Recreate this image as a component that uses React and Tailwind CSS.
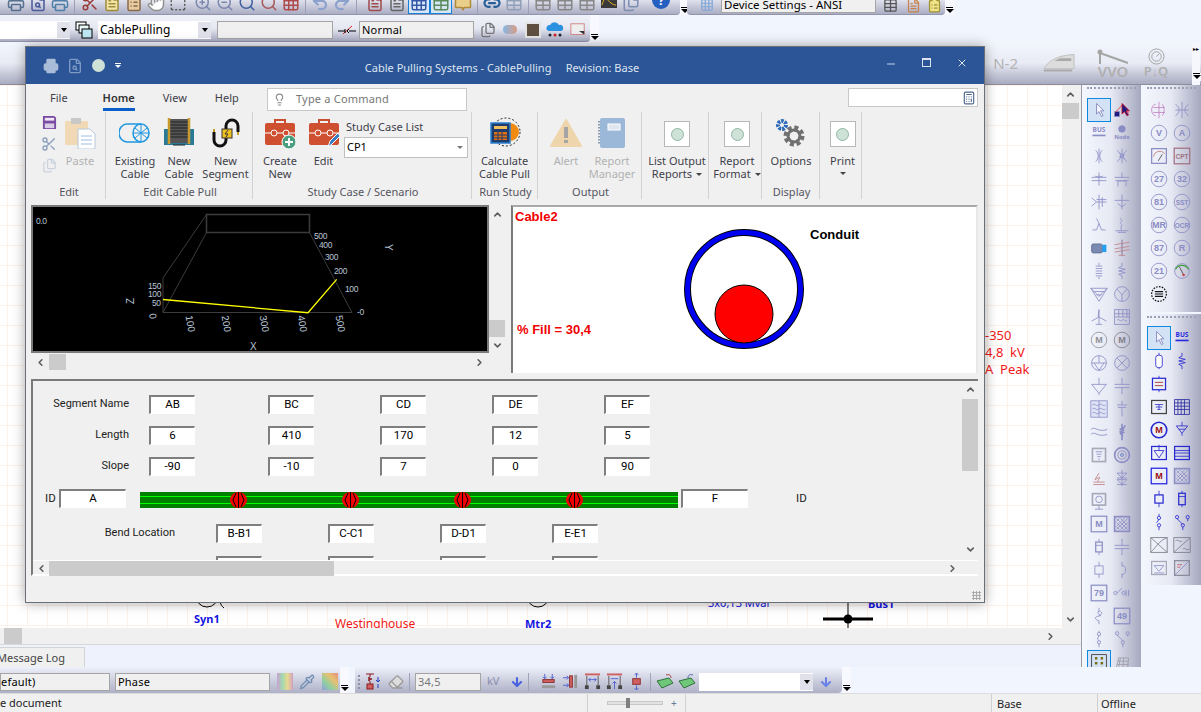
import React from 'react';
import {
  Printer, FileSearch, Scissors, FileText, ClipboardList, Hand, BoxSelect, ZoomIn, ZoomOut, Search,
  Undo2, Redo2, Grid3x3, Link2, Files, Lightbulb, ChevronUp, ChevronDown, ChevronLeft, ChevronRight,
  Minus, X, Calculator, Table, BookOpen, ArrowDown, Pipette, Eraser,
} from 'lucide-react';

const FONT = "font-['Noto_Sans',sans-serif]";
const FORM = "font-['Roboto',sans-serif]";

// little black chevron at the end of each docked toolbar
function Overflow() {
  return (
    <div className="w-[9px] self-stretch flex flex-col justify-end items-center pb-[2px] bg-[#f8f9fe]">
      <div className="w-[7px] h-[1px] bg-black mb-[1px]" />
      <div className="w-0 h-0 border-x-[4px] border-x-transparent border-t-[4px] border-t-black" />
    </div>
  );
}

function Sep() {
  return <div className="w-[1px] h-full bg-[#9d9fb8] mx-[3px] shrink-0" />;
}

function Cell({ children, className = '' }) {
  return <div className={`w-[22px] shrink-0 flex items-center justify-center ${className}`}>{children}</div>;
}

function Combo({ w, text }) {
  return (
    <div className={`${w} h-[18px] flex items-center bg-white shrink-0`}>
      <span className={`flex-1 pl-[2px] text-[12px] text-black ${FONT} leading-none`}>{text}</span>
      <div className="w-[13px] h-[16px] flex items-center justify-center bg-[#e0e1ea]">
        <div className="w-0 h-0 border-x-[3px] border-x-transparent border-t-[4px] border-t-black" />
      </div>
    </div>
  );
}

function Input({ w, text, color = 'text-black', pad = 'pl-[2px]' }) {
  return (
    <div className={`${w} h-[18px] flex items-center bg-[#f0f0f0] border border-[#a5a5a5] shrink-0 ${pad} text-[11px] tracking-[0.2px] ${color} ${FONT} leading-none`}>
      {text}
    </div>
  );
}

function TopBars() {
  const ic = 'w-[18px] h-[18px] shrink-0';
  return (
    <div className="h-[15px] flex items-stretch overflow-hidden">
      <div className="w-[680px] h-[15px] flex items-end pl-[5px] rounded-br-[4px] bg-gradient-to-b from-[#dfe1ec] to-[#abadc4] border-b border-[#9294ad]">
        <div className="flex h-[15px] items-end [&>div]:h-[22px]">
          <Cell><Printer className={`${ic} text-[#55708f]`} /></Cell>
          <Cell><FileSearch className={`${ic} text-[#4a5a9c]`} /></Cell>
          <Cell><Printer className={`${ic} text-[#4f7fa8]`} /></Cell>
          <Sep />
          <Cell className="ml-[1px]"><Scissors className={`${ic} text-[#9a3a3a]`} /></Cell>
          <Cell><FileText className={`${ic} text-[#a08a3c] fill-[#f2e6a6]`} /></Cell>
          <Cell><ClipboardList className={`${ic} text-[#8a6a4a] fill-[#e6cba0]`} /></Cell>
          <Cell><Hand className={`${ic} text-[#8f8f8f] fill-white`} /></Cell>
          <Cell><BoxSelect className={`${ic} text-[#555] fill-[#efe38a]`} /></Cell>
          <Cell className="ml-[3px]"><ZoomIn className={`${ic} text-[#7a88ab]`} /></Cell>
          <Cell><ZoomOut className={`${ic} text-[#7a88ab]`} /></Cell>
          <Cell><Search className={`${ic} text-[#3f5f9f]`} /></Cell>
          <Cell><Search className={`${ic} text-[#a85a5a]`} /></Cell>
          <Cell><Grid3x3 className={`${ic} text-[#b04a4a]`} /></Cell>
          <Sep />
          <Cell><Undo2 className={`${ic} text-[#8ba2cc]`} strokeWidth={3} /></Cell>
          <Cell><Redo2 className={`${ic} text-[#8ba2cc]`} strokeWidth={3} /></Cell>
          <Sep />
          <Cell className="ml-[4px]"><FileText className={`${ic} text-[#a04a4a]`} /></Cell>
          <Cell><FileText className={`${ic} text-[#666]`} /></Cell>
          <Cell className="bg-[#d6e6f6] border border-[#1683d8]"><Grid3x3 className={`${ic} text-[#3458a8]`} /></Cell>
          <Cell className="bg-[#d6e6f6] border border-[#1683d8]"><Table className={`${ic} text-[#5a8a5a]`} /></Cell>
          <Cell><BookOpen className={`${ic} text-[#b08a3a] fill-[#e9cf8a]`} /></Cell>
          <Sep />
          <Cell><Link2 className={`${ic} text-[#285f97]`} strokeWidth={3} /></Cell>
          <Cell><Table className={`${ic} text-[#8fa0b8]`} /></Cell>
          <Sep />
          <Cell><Table className={`${ic} text-[#888]`} /></Cell>
          <Cell><Table className={`${ic} text-[#888]`} /></Cell>
          <Cell><Table className={`${ic} text-[#888]`} /></Cell>
          <Cell><svg viewBox="0 0 18 18" className={ic}><rect x="1" y="0" width="16" height="14" fill="#3a3a3a" /><path d="M2 11c4-14 6 0 14 0" stroke="#e0b020" fill="none" /></svg></Cell>
          <Cell><Files className={`${ic} text-[#7b8db0]`} /></Cell>
          <div className="w-[8px]" />
          <Cell>
            <svg viewBox="0 0 18 18" className={ic}><circle cx="9" cy="6" r="9" fill="#2560c0" /><text x="9" y="11" textAnchor="middle" fontSize="12" fontWeight="700" fill="#fff">?</text></svg>
          </Cell>
        </div>
      </div>
      <Overflow />
      <div className="ml-[-2px] w-[258px] h-[15px] flex items-center pl-[13px] rounded-bl-[4px] rounded-br-[4px] bg-gradient-to-b from-[#dfe1ec] to-[#abadc4] border-b border-[#9294ad] overflow-hidden">
        <Grid3x3 className="w-[14px] h-[14px] text-[#7fa6d8] shrink-0 -mt-[4px]" />
        <div className={`w-[155px] h-[14px] ml-[7px] -mt-[2px] bg-[#f0f0f0] border border-[#a5a5a5] border-t-0 text-[11.5px] leading-[11px] pl-[2px] text-black ${FONT} whitespace-nowrap`}>Device Settings - ANSI</div>
        <Table className="w-[15px] h-[15px] ml-[7px] text-[#555] shrink-0 -mt-[4px]" />
        <FileText className="w-[15px] h-[15px] ml-[8px] text-[#c8824a] shrink-0 -mt-[4px]" />
        <ClipboardList className="w-[15px] h-[15px] ml-[6px] text-[#a09030] fill-[#efe38a] shrink-0 -mt-[4px]" />
      </div>
      <Overflow />
    </div>
  );
}

function SecondBar() {
  return (
    <div className="h-[27px] flex items-stretch">
      <div className="w-[590px] flex items-center pt-[3px] bg-gradient-to-b from-[#f0f2f9] via-[#e6e8f2] to-[#acaec5] rounded-br-[4px] border-b border-[#9294ad]">
        <Combo w="w-[70px]" />
        <svg viewBox="0 0 18 18" className="w-[18px] h-[18px] ml-[5px] shrink-0">
          <rect x="1" y="1" width="10" height="8" fill="#fff" stroke="#000" />
          <rect x="4" y="4" width="10" height="8" fill="#e8f6fa" stroke="#000" />
          <rect x="7" y="8" width="10" height="9" fill="#bfe6f2" stroke="#000" />
        </svg>
        <div className="ml-[5px]"><Combo w="w-[113px]" text="CablePulling" /></div>
        <div className="ml-[6px]"><Input w="w-[116px]" /></div>
        <svg viewBox="0 0 18 12" className="w-[18px] h-[12px] ml-[5px] shrink-0" fill="none">
          <path d="M0 7h7M11 7h7" stroke="#000" />
          <path d="M5 10l9-8" stroke="#e02020" />
          <path d="M7 5v4M11 5l-2 2 2 2" stroke="#000" />
        </svg>
        <div className="ml-[3px]"><Input w="w-[115px]" text="Normal" /></div>
        <Files className="w-[16px] h-[16px] ml-[6px] text-[#777] shrink-0" />
        <div className="w-[14px] h-[9px] ml-[7px] rounded-full bg-gradient-to-r from-[#7fb6e6] to-[#d99a80] shrink-0" />
        <div className="w-[16px] h-[16px] ml-[8px] bg-[#5f4f3f] border-2 border-[#e4e4e4] shrink-0" />
        <svg viewBox="0 0 18 18" className="w-[18px] h-[18px] ml-[5px] shrink-0">
          <path d="M3 10a3 3 0 0 1 1-6 5 5 0 0 1 9 0 3 3 0 0 1 2 6z" fill="#2a90e0" />
          <circle cx="4" cy="14" r="1.5" fill="#223" /><circle cx="9" cy="14" r="1.5" fill="#d02020" /><circle cx="14" cy="14" r="1.5" fill="#223" />
        </svg>
        <svg viewBox="0 0 18 18" className="w-[16px] h-[16px] ml-[6px] shrink-0"><rect x="1" y="2" width="15" height="12" fill="#eee" stroke="#d08080" /><path d="M10 10l6 4v-4z" fill="#333" /></svg>
      </div>
      <Overflow />
    </div>
  );
}

function GhostBar() {
  return (
    <div className="h-[43px] flex items-center justify-end bg-gradient-to-b from-[#f3f6fd] via-[#e9ebf5] to-[#a9abc1] pr-[1px] border-b border-[#8e8e9a]">
      <span className={`text-[15px] text-[#b4b4b4] ${FONT} mr-[25px]`}>N-2</span>
      <svg viewBox="0 0 34 22" className="w-[32px] h-[22px] mr-[22px]">
        <path d="M1 17c4-7 12-14 32-15v15z" fill="#dcdcdc" stroke="#bdbdbd" />
        <path d="M12 9l6-3h12v3z" fill="#a8a8a8" />
        <path d="M1 19h30" stroke="#a8a8a8" strokeWidth="2" />
      </svg>
      <div className="w-[32px] mr-[11px] flex flex-col items-center">
        <svg viewBox="0 0 32 16" className="w-[32px] h-[16px]"><circle cx="3" cy="3" r="2.5" fill="#a5a5a5" /><path d="M3 3v12M3 4l28 10" stroke="#a5a5a5" strokeWidth="2" /></svg>
        <span className={`text-[15px] font-semibold leading-[13px] text-[#b0b0b0] ${FONT}`}>VVO</span>
      </div>
      <div className="w-[32px] mr-[20px] flex flex-col items-center">
        <svg viewBox="0 0 18 18" className="w-[17px] h-[17px]" fill="none" stroke="#a0a0a0"><circle cx="9" cy="9" r="8" /><circle cx="9" cy="9" r="5" /><path d="M9 9l3-3" /></svg>
        <span className={`text-[13px] font-semibold leading-[13px] text-[#b0b0b0] ${FONT} whitespace-nowrap`}>P↓Q</span>
      </div>
      <div className="w-[8px] h-[43px] flex flex-col justify-between items-center py-[4px] bg-[#f6f7fd]">
        <span className="text-[6px] leading-none text-black">▸▸</span>
        <Overflow />
      </div>
    </div>
  );
}

function Scroll({ dir, className = '' }) {
  const Ic = { up: ChevronUp, down: ChevronDown, left: ChevronLeft, right: ChevronRight }[dir];
  return <Ic className={`w-[11px] h-[11px] text-[#5f5f5f] shrink-0 ${className}`} strokeWidth={3.5} />;
}

function Canvas() {
  return (
    <div className="relative flex-1 overflow-hidden bg-white bg-[linear-gradient(#fdf1ea_1px,transparent_1px),linear-gradient(90deg,#fdf1ea_1px,transparent_1px)] bg-[size:20px_20px] bg-[position:7px_0]">
      <div className={`absolute left-[985px] top-[242px] text-[13px] leading-[17px] text-[#f01818] ${FONT} whitespace-pre`}>
        <div>-350</div>
        <div>4,8  kV</div>
        <div>A  Peak</div>
      </div>
      <svg viewBox="0 0 40 30" className="absolute left-[190px] top-[511px] w-[40px] h-[30px]" fill="none" stroke="#000"><path d="M6 0a11 11 0 0 0 22 0M31 0c-2 4-1 9 3 12" /></svg>
      <div className={`absolute left-[194px] top-[526px] text-[11px] font-bold text-[#1414e0] ${FONT}`}>Syn1</div>
      <div className={`absolute left-[335px] top-[530px] text-[12px] text-[#f01818] ${FONT}`}>Westinghouse</div>
      <svg viewBox="0 0 30 20" className="absolute left-[523px] top-[511px] w-[30px] h-[20px]" fill="none" stroke="#000"><path d="M4 0a11 11 0 0 0 22 0" /></svg>
      <div className={`absolute left-[525px] top-[531px] text-[11px] font-bold text-[#1414e0] ${FONT}`}>Mtr2</div>
      <div className={`absolute left-[708px] top-[510px] text-[11px] text-[#1414e0] ${FONT} whitespace-nowrap`}>3x0,13 Mvar</div>
      <div className={`absolute left-[868px] top-[511px] text-[11px] font-bold text-[#1414e0] ${FONT}`}>Bus1</div>
      <svg viewBox="0 0 56 26" className="absolute left-[820px] top-[518px] w-[56px] h-[26px]">
        <path d="M28 0v26" stroke="#555" strokeWidth="1.5" />
        <path d="M3 16h50" stroke="#000" strokeWidth="3" />
        <circle cx="28" cy="16" r="4.5" fill="#000" />
      </svg>
    </div>
  );
}

const sym = {
  cursor: <path d="M8 3v13l3-3 3 6 2-1-3-6h4z" stroke="#7d7fb8" fill="#f3f6fd" />,
  cursorRed: <g><rect x="2" y="13" width="6" height="6" fill="#1a1a80" /><path d="M3 14L12 4l7 10" stroke="#e03030" /><path d="M11 3v13l3-3 3 5 2-1-3-5h4z" fill="#1a1a80" stroke="#d01030" /></g>,
  bus: <g><text x="11" y="10" textAnchor="middle" fontSize="8" fontWeight="700" fill="#8a8cc4" stroke="none">BUS</text><path d="M3 14h16" strokeWidth="2" /></g>,
  node: <g><circle cx="11" cy="6" r="4" fill="#8a8cc4" /><text x="11" y="18" textAnchor="middle" fontSize="7" fontWeight="700" fill="#8a8cc4" stroke="none">Node</text></g>,
  react: <path d="M11 2v18M7 4c4 4 4 10 0 14M15 4c-4 4-4 10 0 14" />,
  react2: <path d="M11 2v18M5 4c6 5 6 9 0 14M17 4c-6 5-6 9 0 14M8 8l6 2-6 2 6 2" />,
  xf2: <path d="M2 9h18M2 13h18M11 3v16M6 7a3 3 0 0 0 5 0 3 3 0 0 0 5 0" />,
  xf2b: <path d="M2 9h18M11 3v6M6 20v-6a4 4 0 0 1 4 0M16 20v-6a4 4 0 0 0-4 0M3 13h16" />,
  xf3: <path d="M2 6l6 5-6 5M8 11h12M8 8h12M11 2v18M15 5v12" />,
  xf3b: <path d="M2 9h18M11 2v18M6 13l5 4 5-4" />,
  sw: <path d="M3 17h5l3-8 3 8h5M11 9l-3-6" />,
  grd: <path d="M10 2c-3 2 3 3 0 5s3 3 0 5v6M3 18h16M6 20h10" />,
  tower: <g><path d="M11 1v19M7 20h8M2 7l18-3M2 12l18-3M2 16l18-3" stroke="#c08080" /><path d="M11 1v19" /></g>,
  coil: <path d="M11 1v3M7 5h8M7 8h8M7 11h8M7 14h8M7 17h8M11 18v3" />,
  res: <path d="M11 1v4l-4 2 8 2-8 2 8 2-8 2 4 2v4" />,
  delta: <path d="M1 4h20L11 20zM5 8h12M8 12h6M1 4l10 10 10-10" />,
  wye: <g><circle cx="11" cy="11" r="9" /><path d="M5 5l6 7 6-7M11 12v8" /></g>,
  wind: <path d="M11 2v18M7 20h8M11 11L2 16M11 11l9 5M11 2l-1 9" />,
  solar: <g><rect x="2" y="2" width="18" height="18" /><path d="M2 7h18M2 11h18M7 2v9M12 2v9M17 2v9M5 15c3-3 3 3 6 0s3 3 6 0" /></g>,
  load: <g><circle cx="11" cy="11" r="9" /><path d="M2 11h18M11 2v9M5 11l6 9 6-9" /></g>,
  x: <g><circle cx="11" cy="11" r="9" /><path d="M5 5l12 12M17 5L5 17" /></g>,
  gnd: <path d="M11 1v8M2 9h18L11 20zM11 20v2" />,
  cap: <path d="M11 1v8M2 9h18M2 13h18M11 13v8" />,
  filter: <g><rect x="1" y="1" width="20" height="20" fill="#dfe3f6" /><path d="M3 6c3-3 5 3 8 0s5 3 8 0M3 11c3-3 5 3 8 0s5 3 8 0M3 16c3-3 5 3 8 0s5 3 8 0M11 1v20" /></g>,
  capg: <path d="M11 1v5M5 6h12M6 9h10M11 9v3c-3 1 3 2 0 3s3 2 0 3v2" />,
  sine: <path d="M1 8c5-5 8 4 20 0M1 14c5-5 8 4 20 0" />,
  feeder: <path d="M11 1v20M15 3c-2 4-6 6-6 9s4 1 2 5M8 7l6 2M8 10l6 2" strokeWidth="2" />,
  pan: <g><rect x="3" y="3" width="16" height="16" strokeWidth="2" stroke="#a8a8b8" /><path d="M7 7h8M8 10h6M9 13h4M10 16h2" /></g>,
  rings: <g><circle cx="11" cy="11" r="9" strokeWidth="2" /><circle cx="11" cy="11" r="5" /><circle cx="11" cy="11" r="2" fill="#8fb0d0" /></g>,
  surge: <path d="M11 5l-5 8 6-3-3 6M4 16h14M4 19h14" stroke="#c08080" />,
  diode: <path d="M11 1v20M5 5h12L11 11zM5 11h12M5 13h12L11 19zM5 19h12" />,
  ups: <g><rect x="3" y="2" width="16" height="14" strokeWidth="2" stroke="#a8a8b8" /><circle cx="11" cy="9" r="4" /><path d="M11 16v5M6 21h10" /></g>,
  hatch: <g><rect x="2" y="2" width="18" height="18" strokeWidth="2" /><path d="M4 8l4-4M4 14L14 4M4 18L18 4M9 18l9-9M14 18l4-4M4 4l14 14M9 4l9 9M4 9l9 9M4 14l4 4" /></g>,
  fuse: <g><rect x="7" y="5" width="8" height="12" strokeWidth="1.5" /><path d="M11 1v4M11 17v4M7 9h8" /></g>,
  box: <g><rect x="6" y="6" width="10" height="10" /><path d="M11 1v5M11 16v5" /></g>,
  arc: <path d="M11 1v6M11 15v6M11 5c6 1 6 11 0 12" />,
  ooo: <g><circle cx="3" cy="11" r="2" /><path d="M5 11l6-6" /><circle cx="13" cy="11" r="2" /><path d="M16 7v8M19 7v8" /></g>,
  curl: <path d="M11 1v4c-6 3 6 5 0 6s-6 4 0 6v4M11 5c5 1 4 4 0 6" />,
  disc: <g><circle cx="11" cy="5" r="2" /><path d="M11 7l-2 4 2 2" /><circle cx="11" cy="15" r="2" /><path d="M11 1v2M11 17v4" /></g>,
  disc2: <g><circle cx="5" cy="4" r="2" /><circle cx="18" cy="4" r="2" /><path d="M5 6l8 8M18 6v2" /><circle cx="12" cy="15" r="2" /><path d="M12 17v4" /></g>,
  mesh: <g><path d="M4 18L7 6h12l-1 12zM9 6l-2 12M13 6l-1 12M5 14h14M6 10h13" stroke="#9a9aa8" /></g>,
  dots: <g><rect x="2" y="2" width="18" height="20" stroke="#333" /><g fill="#7a6a10" stroke="none"><rect x="6" y="5" width="3" height="3" /><rect x="13" y="5" width="3" height="3" /><rect x="6" y="11" width="3" height="3" /><rect x="13" y="11" width="3" height="3" /><rect x="6" y="17" width="3" height="3" /><rect x="13" y="17" width="3" height="3" /></g></g>,
  motor: <g><rect x="2" y="6" width="13" height="11" rx="2" fill="#7a8ab0" stroke="#5a6a90" /><rect x="15" y="7" width="5" height="9" fill="#22a0f0" stroke="none" /></g>,
  gauge: <g><circle cx="11" cy="11" r="9" /><path d="M3 9a9 9 0 0 1 16 0" stroke="#40a040" strokeWidth="1.5" /><path d="M8 6l5 10" stroke="#444" /><circle cx="13" cy="16" r="1.5" fill="#d04040" stroke="none" /></g>,
  meter: <g><rect x="2" y="2" width="18" height="18" strokeWidth="1.5" /><path d="M4 12a8 8 0 0 1 14-4" stroke="#c08080" /><path d="M10 17l5-8" stroke="#444" /></g>,
  gear: <g stroke="#111" strokeWidth="1.5" strokeDasharray="2 1.5"><circle cx="11" cy="11" r="9" /><path d="M6 8h10M6 11h10M6 14h10" strokeDasharray="none" /></g>,
  emerg: <path d="M11 1v20M7 4a5 7 0 0 0 0 14M4 8h14M4 14h14M15 4c3 4 3 10 0 14" />,
  emerg2: <path d="M11 1v20M3 4c6 4 6 10 0 14M19 4c-6 4-6 10 0 14M3 11h16" />,
  busB: <g><text x="11" y="10" textAnchor="middle" fontSize="8" fontWeight="700" fill="#2828e0" stroke="none">BUS</text><path d="M3 14h16" strokeWidth="2" stroke="#2828e0" /></g>,
  bat: <g stroke="#2828d0"><rect x="7" y="4" width="8" height="15" rx="3" fill="#fff" /><path d="M11 1v3M11 19v2" /></g>,
  resB: <path d="M11 1v4l-4 2 8 2-8 2 8 2-8 2 4 2v4" stroke="#2828d0" />,
  busD: <g stroke="#2828d0"><rect x="3" y="4" width="16" height="14" strokeWidth="1.5" /><path d="M6 9h10M6 13h10" stroke="#a02020" /><path d="M11 1v3M11 18v3" /></g>,
  pan2: <g><rect x="2" y="3" width="18" height="16" strokeWidth="1.5" stroke="#444" /><path d="M6 8h10M7 11h8M9 14h4M11 8v6" stroke="#3030c0" /></g>,
  grid2: <g stroke="#2828a0"><rect x="2" y="2" width="18" height="18" /><path d="M2 6h18M2 10h18M2 14h18M6 2v18M10 2v18M14 2v18" /></g>,
  gnd2: <path d="M11 1v5M4 6h14L11 15zM7 10h8M11 15v3" stroke="#2828d0" />,
  dbox: <g stroke="#2828d0"><rect x="2" y="3" width="18" height="16" strokeWidth="1.5" /><path d="M5 8h12l-6 9zM11 1v7" /></g>,
  lines: <g stroke="#2828d0"><rect x="2" y="3" width="18" height="16" strokeWidth="1.5" /><path d="M2 8h18M2 11h18M2 15h18" /></g>,
  boxB: <g stroke="#2828d0"><rect x="6" y="6" width="10" height="10" strokeWidth="1.5" /><path d="M11 1v5M11 16v5" /></g>,
  fuseB: <g stroke="#2828d0"><rect x="7" y="4" width="8" height="14" strokeWidth="1.5" /><path d="M11 1v3M11 18v3M7 8h8" /></g>,
  discB: <g stroke="#2828d0"><circle cx="11" cy="6" r="2" /><circle cx="11" cy="15" r="2" /><path d="M11 1v3M11 8l-3 4M11 17v4" /></g>,
  disc2B: <g stroke="#2828d0"><circle cx="5" cy="5" r="2" /><circle cx="18" cy="5" r="2" /><path d="M5 7l7 7M18 7v3" /><circle cx="12" cy="15" r="2" /><path d="M12 17v4" /></g>,
  cross: <g stroke="#7a7a88"><rect x="1" y="2" width="20" height="18" /><path d="M1 2l20 18M1 20C7 14 12 5 21 2" /></g>,
  cross2: <g stroke="#7a7a88"><rect x="1" y="2" width="20" height="18" /><path d="M1 20L21 2M3 6c4-3 5 3 8 0M12 16c3-3 4 3 8 0" /></g>,
  pv: <g><rect x="2" y="3" width="18" height="16" stroke="#a8a8b8" strokeWidth="1.5" /><path d="M5 8h12l-6 7zM5 17h12" /></g>,
  pv2: <g><rect x="2" y="2" width="18" height="18" stroke="#8a8a9a" strokeWidth="1.5" /><path d="M2 20L20 2" /><path d="M5 7h6M5 10h4" stroke="#c06060" /></g>,
};

function Sym({ name, text, shape, bold, color = '#8a8cc4', selected }) {
  return (
    <div className={`w-[22px] h-[22px] flex items-center justify-center shrink-0 ${selected ? 'outline outline-1 outline-[#0a8ae0] bg-[#d3e3f5]' : ''}`}>
      <svg viewBox="0 0 22 22" className="w-[18px] h-[18px]" fill="none" stroke={color}>
        {shape === 'circle' && <circle cx="11" cy="11" r="9.5" strokeWidth={bold ? 2 : 1} />}
        {shape === 'box' && <rect x="1.5" y="1.5" width="19" height="19" strokeWidth={1.5} />}
        {text && (
          <text x="11" y="15" textAnchor="middle" fontSize={text.length > 2 ? 8 : 11} fontWeight="700" fill={bold ? '#9a1010' : color} stroke="none" fontFamily="Liberation Sans">
            {text}
          </text>
        )}
        {name && sym[name]}
      </svg>
    </div>
  );
}

function Grip() {
  return <div className="h-[2px] mx-[5px] mt-[2px] border-t-2 border-dotted border-[#9ca0b4]" />;
}

const palette1 = [
  { name: 'cursor', selected: true }, { name: 'cursorRed' },
  { name: 'bus' }, { name: 'node' },
  { name: 'react' }, { name: 'react2' },
  { name: 'xf2' }, { name: 'xf2b' },
  { name: 'xf3' }, { name: 'xf3b' },
  { name: 'sw' }, { name: 'grd' },
  { name: 'motor' }, { name: 'tower' },
  { name: 'coil' }, { name: 'res' },
  { name: 'delta' }, { name: 'wye' },
  { name: 'wind' }, { name: 'solar' },
  { shape: 'circle', text: 'M', color: '#909098' }, { shape: 'circle', text: 'M', color: '#808088' },
  { name: 'load' }, { name: 'x' },
  { name: 'gnd' }, { name: 'cap' },
  { name: 'filter' }, { name: 'capg' },
  { name: 'sine' }, { name: 'feeder' },
  { name: 'pan' }, { name: 'rings' },
  { name: 'surge' }, { name: 'diode' },
  { name: 'ups' }, {},
  { shape: 'box', text: 'M' }, { name: 'hatch' },
  { name: 'fuse' }, { name: 'cap' },
  { name: 'box' }, { name: 'arc' },
  { shape: 'box', text: '79' }, { name: 'ooo' },
  { name: 'curl' }, { shape: 'box', text: '49' },
  { name: 'disc' }, { name: 'disc2' },
  { name: 'dots', selected: true }, { name: 'mesh' },
];

const palette2a = [
  { name: 'emerg', color: '#c080c0' }, { name: 'emerg2' },
  { shape: 'circle', text: 'V' }, { shape: 'circle', text: 'A' },
  { name: 'meter' }, { shape: 'box', text: 'CPT', color: '#a07080' },
  { shape: 'circle', text: '27' }, { shape: 'circle', text: '32' },
  { shape: 'circle', text: '81' }, { shape: 'circle', text: 'SST' },
  { shape: 'circle', text: 'MR' }, { shape: 'circle', text: 'OCR' },
  { shape: 'circle', text: '87' }, { shape: 'circle', text: 'R' },
  { shape: 'circle', text: '21' }, { name: 'gauge' },
  { name: 'gear', color: '#111' }, {},
];

const palette2b = [
  { name: 'cursor', selected: true }, { name: 'busB' },
  { name: 'bat' }, { name: 'resB' },
  { name: 'busD' }, {},
  { name: 'pan2' }, { name: 'grid2' },
  { shape: 'circle', text: 'M', bold: true, color: '#2828d0' }, { name: 'gnd2' },
  { name: 'dbox' }, { name: 'lines' },
  { shape: 'box', text: 'M', bold: true, color: '#2020e0' }, { name: 'hatch' },
  { name: 'boxB' }, { name: 'fuseB' },
  { name: 'discB' }, { name: 'disc2B' },
  { name: 'cross' }, { name: 'cross2' },
  { name: 'pv' }, { name: 'pv2' },
];

function PaletteGrid({ items }) {
  return (
    <div className="grid grid-cols-[22px_22px] justify-center gap-x-[1px] auto-rows-[23px] items-center pr-[2px]">
      {items.map((it, i) => <Sym key={i} {...it} />)}
    </div>
  );
}

function Palettes() {
  const bg = 'bg-gradient-to-r from-[#f4f7fe] via-[#e6e8f3] to-[#a6a8bf]';
  return (
    <div className="flex w-[120px] shrink-0">
      <div className={`w-[60px] h-full overflow-hidden border-l border-[#9a9aa8] ${bg}`}>
        <Grip />
        <div className="pt-[9px]"><PaletteGrid items={palette1} /></div>
      </div>
      <div className="w-[60px] ml-[1px] flex flex-col bg-[#f1f5fd]">
        <div className={`h-[227px] ${bg}`}>
          <Grip />
          <div className="pt-[9px]"><PaletteGrid items={palette2a} /></div>
        </div>
        <div className={`h-[271px] mt-[2px] ${bg}`}>
          <Grip />
          <div className="pt-[8px]"><PaletteGrid items={palette2b} /></div>
        </div>
      </div>
    </div>
  );
}

function AlignIcons() {
  const cls = 'w-[17px] h-[17px] shrink-0 ml-[5px]';
  return (
    <>
      <svg viewBox="0 0 18 18" className="w-[17px] h-[17px] shrink-0 ml-[11px]" fill="none">
        <rect x="3" y="7" width="12" height="3" fill="#d06060" stroke="#8a3030" /><rect x="2" y="13" width="14" height="3" fill="#999" />
        <path d="M5 1v5M13 1v5M3 4l2 2 2-2M11 4l2 2 2-2" stroke="#5060d0" />
      </svg>
      <svg viewBox="0 0 18 18" className={cls} fill="none">
        <rect x="8" y="3" width="3" height="12" fill="#d06060" stroke="#8a3030" /><rect x="13" y="2" width="3" height="14" fill="#999" />
        <path d="M1 5h6M1 13h6M5 3l2 2-2 2M5 11l2 2-2 2" stroke="#5060d0" />
      </svg>
      <svg viewBox="0 0 18 18" className={cls} fill="none">
        <path d="M1 1.5h16" stroke="#d06060" strokeWidth="2" /><path d="M3 3v10M15 3v10" stroke="#555" /><rect x="1" y="13" width="4" height="4" fill="#444" /><rect x="13" y="13" width="4" height="4" fill="#444" />
        <path d="M5 7h8M5 7l2-2M13 7l-2-2M5 7l2 2M13 7l-2 2" stroke="#5060d0" />
      </svg>
      <svg viewBox="0 0 18 18" className={cls} fill="none">
        <path d="M1 1.5h16" stroke="#d06060" strokeWidth="2" /><path d="M3 3v10M15 3v10" stroke="#555" /><rect x="1" y="13" width="4" height="4" fill="#444" /><rect x="13" y="13" width="4" height="4" fill="#444" />
        <path d="M5 6h8M9 17V9M7 11l2-2 2 2" stroke="#5060d0" />
      </svg>
      <svg viewBox="0 0 18 18" className={cls} fill="none">
        <rect x="5" y="6" width="8" height="6" fill="#d06060" stroke="#8a3030" />
        <path d="M9 0v5M9 13v5M7 2l2-2 2 2M7 16l2 2 2-2" stroke="#5060d0" />
      </svg>
    </>
  );
}

function BottomBar() {
  return (
    <div className="h-[26px] flex items-stretch">
      <div className="flex items-center pt-[3px] w-[340px] bg-gradient-to-b from-[#eef1fa] to-[#aeb0c6]">
        <Input w="w-[110px]" text="efault)" pad="pl-0" />
        <div className="ml-[5px]"><Input w="w-[155px]" text="Phase" /></div>
        <div className="w-[16px] h-[17px] ml-[7px] bg-[linear-gradient(90deg,#c9a0d0,#a0d8b0,#e8d890,#d0a0c0)] shrink-0" />
        <Pipette className="w-[16px] h-[16px] ml-[6px] text-[#6f8fb5] shrink-0" />
        <div className="w-[16px] h-[17px] ml-[7px] bg-[linear-gradient(45deg,#90a0e0,#90d0a0,#e8c070,#e09080)] shrink-0" />
      </div>
      <Overflow />
      <div className="w-[6px]" />
      <div className="flex items-center pt-[3px] w-[487px] pl-[3px] rounded-br-[4px] bg-gradient-to-b from-[#eef1fa] to-[#aeb0c6]">
        <div className="h-[14px] border-l-2 border-dotted border-[#8e90a8]" />
        <svg viewBox="0 0 18 18" className="w-[18px] h-[18px] ml-[5px] shrink-0" fill="none">
          <path d="M1 1h8M5 1v3l-2 1 4 1-4 1 2 1v3" stroke="#8a1a1a" /><rect x="2" y="11" width="6" height="5" fill="#d06060" stroke="#8a1a1a" />
          <path d="M13 4v5M15 7l-2 2-2-2M13 15v-4" stroke="#2040c0" />
        </svg>
        <Eraser className="w-[16px] h-[16px] ml-[5px] text-[#999] fill-[#ddd] shrink-0" />
        <div className="w-[1px] h-[18px] bg-[#a0a2b8] ml-[5px]" />
        <div className="ml-[5px]"><Input w="w-[66px]" text="34,5" color="text-[#777]" /></div>
        <span className={`ml-[6px] text-[11px] text-[#8a8cb0] ${FONT}`}>kV</span>
        <ArrowDown className="w-[14px] h-[14px] ml-[11px] text-[#4a62e0]" strokeWidth={3.5} />
        <div className="w-[1px] h-[18px] bg-[#a0a2b8] ml-[4px]" />
        <AlignIcons />
        <div className="w-[1px] h-[18px] bg-[#a0a2b8] ml-[5px]" />
        <svg viewBox="0 0 18 18" className="w-[18px] h-[18px] ml-[5px] shrink-0"><path d="M1 8l12-3 4 5-11 5z" fill="#6fc87a" stroke="#2f6f3a" /><path d="M10 2c3-1 5 0 5 3" stroke="#b04040" fill="none" /></svg>
        <svg viewBox="0 0 18 18" className="w-[18px] h-[18px] ml-[4px] shrink-0"><path d="M1 8l12-3 4 5-11 5z" fill="#6fc87a" stroke="#2f6f3a" /><path d="M15 2c-3-1-5 0-5 3" stroke="#5a6ab0" fill="none" /></svg>
        <div className="ml-[3px]"><Combo w="w-[114px]" /></div>
        <ArrowDown className="w-[14px] h-[14px] ml-[6px] text-[#6a82e8]" strokeWidth={3.5} />
      </div>
      <Overflow />
    </div>
  );
}

function StatusBar() {
  return (
    <div className={`h-[19px] flex items-center bg-[#f0f0f0] border-t border-[#dcdcdc] text-[11px] text-[#222] ${FONT}`}>
      <span className="w-[587px]">e document</span>
      <div className="w-[98px] h-full border-l border-[#d0d0d0] flex items-center pl-[19px]">
        <div className="relative w-[56px] h-[4px] bg-[#e2e2e2] border border-[#c8c8c8]">
          <div className="absolute left-[18px] -top-[4px] w-[4px] h-[10px] bg-[#7f7f7f]" />
        </div>
        <span className="ml-[8px] text-[10px] text-[#6a7a9a]">+</span>
      </div>
      <div className="w-[306px] h-full border-l border-[#d0d0d0]" />
      <div className="w-[106px] h-full border-l border-[#d0d0d0] pl-[5px] leading-[19px]">Base</div>
      <div className="flex-1 h-full border-l border-[#d0d0d0] pl-[3px] leading-[19px]">Offline</div>
    </div>
  );
}

function BigBtn({ w, icon, lines, caret, dim }) {
  return (
    <div className={`${w} shrink-0 flex flex-col items-center`}>
      <div className="h-[42px] flex items-center justify-center">{icon}</div>
      <div className={`text-center text-[11px] leading-[13px] ${dim ? 'text-[#b0b0b0]' : 'text-[#3f3f4a]'} ${FONT} whitespace-nowrap`}>
        {lines.map((l, i) => <div key={i}>{l}{caret && i === lines.length - 1 && <span className="inline-block ml-[4px] mb-[2px] w-0 h-0 border-x-[3px] border-x-transparent border-t-[3px] border-t-[#444]" />}</div>)}
      </div>
    </div>
  );
}

function Group({ w, label, children }) {
  return (
    <div className={`${w} h-[87px] shrink-0 flex flex-col border-r border-[#d2d2d2]`}>
      <div className="flex-1 flex">{children}</div>
      <div className={`h-[15px] pl-[2px] text-center text-[11px] leading-[15px] text-[#55555f] ${FONT} whitespace-nowrap`}>{label}</div>
    </div>
  );
}

function Placeholder() {
  return (
    <div className="w-[26px] h-[26px] bg-white border border-[#b8b8b8] flex items-center justify-center mt-[2px]">
      <div className="w-[13px] h-[13px] rounded-full bg-[#cfe2d8] border border-[#8fb5a5]" />
    </div>
  );
}

function Toolbox({ children }) {
  return (
    <svg viewBox="0 0 32 32" className="w-[32px] h-[32px]">
      <path d="M11 6V3h10v3" fill="none" stroke="#c94f30" strokeWidth="2" />
      <rect x="1" y="6" width="30" height="22" rx="2" fill="#cf5030" />
      <path d="M1 16h6M13 16h6M25 16h6" stroke="#fff" />
      <circle cx="10" cy="16" r="3" fill="none" stroke="#fff" />
      <circle cx="22" cy="16" r="3" fill="none" stroke="#fff" />
      {children}
    </svg>
  );
}

function Ribbon() {
  return (
    <div className="flex h-[87px] pl-[5px]">
      <Group w="w-[75px]" label="Edit">
        <div className="w-[36px] flex flex-col items-center pt-[3px] gap-[6px]">
          <svg viewBox="0 0 16 16" className="w-[15px] h-[15px]"><path d="M1 1h12l2 2v12H1z" fill="#7a4ba0" /><rect x="3" y="3" width="10" height="3" fill="#efe8f6" /><rect x="3" y="9" width="10" height="5" fill="#d8cce6" /></svg>
          <Scissors className="w-[16px] h-[16px] text-[#8ba0bc]" />
          <Files className="w-[15px] h-[15px] text-[#c9d0de]" />
        </div>
        <BigBtn w="w-[26px]" lines={['Paste']} dim icon={
          <svg viewBox="0 0 32 32" className="w-[32px] h-[32px]"><rect x="1" y="4" width="23" height="24" rx="1" fill="#f1d9b5" /><rect x="7" y="1" width="10" height="6" fill="#c8c8c8" /><path d="M14 12h12l5 5v15H14z" fill="#fff" stroke="#b8c8dc" /><path d="M17 19h11M17 23h11M17 27h11" stroke="#9cc0e0" /></svg>
        } />
      </Group>
      <Group w="w-[147px]" label="Edit Cable Pull">
        <BigBtn w="w-[58px]" lines={['Existing', 'Cable']} icon={
          <svg viewBox="0 0 32 22" className="w-[32px] h-[22px]" fill="none" stroke="#1e96e0" strokeWidth="1.5"><path d="M8 2h14M8 20h14" /><path d="M8 2a8 9 0 0 0 0 18" /><ellipse cx="22" cy="11" rx="8" ry="9" /><path d="M16 6l12 10M16 16l12-10M14 11h16M22 2v18" strokeWidth="1" /></svg>
        } />
        <BigBtn w="w-[30px]" lines={['New', 'Cable']} icon={
          <svg viewBox="0 0 32 32" className="w-[32px] h-[32px]"><path d="M1 12h30v16H1z" fill="#2a7a96" /><rect x="6" y="2" width="20" height="24" fill="#555" /><path d="M6 5h20M6 8h20M6 11h20M6 14h20M6 17h20M6 20h20" stroke="#222" /><path d="M6 1v26M26 1v26" stroke="#c89a30" strokeWidth="2.5" /><path d="M10 28h12" stroke="#222" /></svg>
        } />
        <BigBtn w="w-[63px]" lines={['New', 'Segment']} icon={
          <svg viewBox="0 0 32 32" className="w-[32px] h-[32px]" fill="none"><path d="M4 15v8a6 6 0 0 0 12 0V9a6 6 0 0 1 12 0v6" stroke="#111" strokeWidth="3" /><rect x="12" y="12" width="10" height="9" fill="#f0c020" stroke="#333" /><path d="M18 13l-3 4h3l-2 3" stroke="#333" /><path d="M4 12v3M28 15v3" stroke="#c8a020" strokeWidth="2" /></svg>
        } />
      </Group>
      <Group w="w-[219px]" label="Study Case / Scenario">
        <BigBtn w="w-[54px]" lines={['Create', 'New']} icon={
          <Toolbox><circle cx="25" cy="25" r="7" fill="#4a9e80" stroke="#fff" /><path d="M25 21v8M21 25h8" stroke="#fff" strokeWidth="2" /></Toolbox>
        } />
        <BigBtn w="w-[33px]" lines={['Edit']} icon={
          <Toolbox><path d="M20 30l2-6 8-8 2 3-8 8z" fill="#3a7ac0" stroke="#fff" /></Toolbox>
        } />
        <div className="ml-[4px] w-[124px] pt-[7px]">
          <div className={`pl-[2px] text-[11px] leading-[16px] text-[#3f3f4a] ${FONT}`}>Study Case List</div>
          <div className="mt-[2px] h-[21px] bg-white border border-[#c0c0c0] flex items-center justify-between px-[2px]">
            <span className={`text-[11px] text-black ${FONT}`}>CP1</span>
            <div className="mr-[2px] w-0 h-0 border-x-[3px] border-x-transparent border-t-[3px] border-t-[#777]" />
          </div>
        </div>
      </Group>
      <Group w="w-[66px]" label="Run Study">
        <BigBtn w="w-[65px]" lines={['Calculate', 'Cable Pull']} icon={
          <svg viewBox="0 0 32 32" className="w-[32px] h-[32px]">
            <circle cx="17" cy="15" r="14" fill="none" stroke="#222" strokeDasharray="2 2" />
            <circle cx="21" cy="15" r="9" fill="#f08a10" />
            <rect x="2" y="6" width="19" height="20" fill="#1f3c6a" stroke="#2a80d0" strokeWidth="1.5" />
            <rect x="5" y="9" width="13" height="3" fill="#f0c060" />
            <path d="M5 15h13v8H5z" fill="#e07010" /><path d="M5 18h13M5 21h13M9 15v8M13 15v8" stroke="#1f3c6a" />
          </svg>
        } />
      </Group>
      <Group w="w-[104px]" label="Output">
        <BigBtn w="w-[56px]" lines={['Alert']} dim icon={
          <svg viewBox="0 0 32 30" className="w-[32px] h-[30px]"><path d="M16 2l15 26H1z" fill="#efd5ac" stroke="#efd5ac" strokeLinejoin="round" strokeWidth="2" /><rect x="14" y="9" width="4" height="11" fill="#a5a5a5" /><rect x="14" y="22" width="4" height="3" fill="#a5a5a5" /></svg>
        } />
        <BigBtn w="w-[36px]" lines={['Report', 'Manager']} dim icon={
          <svg viewBox="0 0 28 32" className="w-[28px] h-[32px]"><rect x="2" y="1" width="25" height="30" rx="2" fill="#9cb8d8" /><path d="M1 4v24" stroke="#8a9ab0" strokeWidth="2" strokeDasharray="1.5 1.5" /><rect x="10" y="7" width="12" height="6" fill="#dfe6f0" stroke="#fff" /></svg>
        } />
      </Group>
      <Group w="w-[67px]" label="">
        <BigBtn w="w-[70px]" lines={['List Output', 'Reports']} caret icon={<Placeholder />} />
      </Group>
      <Group w="w-[53px]" label="">
        <BigBtn w="w-[56px]" lines={['Report', 'Format']} caret icon={<Placeholder />} />
      </Group>
      <Group w="w-[58px]" label="Display">
        <BigBtn w="w-[58px]" lines={['Options']} icon={
          <svg viewBox="0 0 32 32" className="w-[32px] h-[32px]" fill="none">
            <circle cx="7" cy="8" r="4" stroke="#2a6ab8" strokeWidth="4" strokeDasharray="2.5 1" />
            <circle cx="19" cy="19" r="7.5" stroke="#707070" strokeWidth="6" strokeDasharray="3.5 2.4" />
            <circle cx="19" cy="19" r="6" stroke="#707070" strokeWidth="3" />
          </svg>
        } />
      </Group>
      <Group w="w-[42px]" label="">
        <div className="w-[45px] shrink-0 flex flex-col items-center">
          <div className="h-[42px] flex items-center"><Placeholder /></div>
          <div className={`text-[11px] leading-[13px] text-[#3f3f4a] ${FONT}`}>Print</div>
          <div className="mt-[5px] w-0 h-0 border-x-[3px] border-x-transparent border-t-[3px] border-t-[#444]" />
        </div>
      </Group>
    </div>
  );
}

function Chart() {
  const label = { fill: '#b9c4d6', fontSize: 8.5, letterSpacing: -0.4, fontFamily: 'Liberation Sans' };
  const big = { fill: '#b9c4d6', fontSize: 10, fontFamily: 'Liberation Sans' };
  const xticks = [['100', 185.5], ['200', 221.5], ['300', 259.5], ['400', 297.5], ['500', 335.5]];
  const yticks = [['500', 314, 239], ['400', 319, 248], ['300', 325, 260], ['200', 334, 274], ['100', 345, 292]];
  return (
    <svg viewBox="33 207 454 144" className="w-[454px] h-[144px] block bg-black">
      <g fill="none" stroke="#3c3c3c">
        <rect x="206.5" y="214.5" width="103" height="18" strokeWidth="1.5" />
        <path d="M163 312.5H352L309.5 232.5M163 312.5L206.5 232.5M163 278L206.5 214.5M163 278v34" />
      </g>
      <path d="M163 299.5L308 312.7L336.7 279.3" fill="none" stroke="#ffff00" strokeWidth="1.3" />
      <text x="36" y="224" {...label}>0.0</text>
      <text x="148" y="289" {...label}>150</text>
      <text x="148" y="297" {...label}>100</text>
      <text x="152" y="306" {...label}>50</text>
      <text x="357" y="315" {...label}>-0</text>
      {yticks.map(([t, x, y]) => <text key={t} x={x} y={y} {...label}>{t}</text>)}
      {xticks.map(([t, x]) => <text key={t} transform={`rotate(80 ${x} 316)`} x={x} y={316} {...big}>{t}</text>)}
      <text transform="rotate(80 149 314)" x="149" y="314" {...big}>0</text>
      <text transform="rotate(-90 134 304)" x="134" y="304" {...big}>Z</text>
      <text transform="rotate(90 385 244)" x="385" y="244" {...big}>Y</text>
      <text x="250" y="350" {...big}>X</text>
    </svg>
  );
}

function Field({ text, w = 'w-[46px]' }) {
  return (
    <div className={`${w} h-[19px] shrink-0 bg-white border-t-2 border-l-2 border-[#7f7f7f] border-b border-r border-b-white border-r-white flex items-center justify-center text-[11.5px] leading-none text-black ${FORM}`}>
      {text}
    </div>
  );
}

function SegRow({ label, values, top = '' }) {
  return (
    <div className={`flex items-center ${top}`}>
      <div className={`w-[96px] text-right text-[11px] text-[#222] ${FORM}`}>{label}</div>
      <div className="ml-[20px]"><Field text={values[0]} /></div>
      <div className="ml-[73px]"><Field text={values[1]} /></div>
      <div className="ml-[66px]"><Field text={values[2]} /></div>
      <div className="ml-[66px]"><Field text={values[3]} /></div>
      <div className="ml-[66px]"><Field text={values[4]} /></div>
    </div>
  );
}

function Bend({ left }) {
  return (
    <svg viewBox="0 0 17 16" className={`absolute top-0 ${left} w-[17px] h-[16px]`} fill="none">
      <ellipse cx="8.5" cy="8" rx="8.5" ry="8" fill="#f00000" />
      <path d="M8.5 0v16M6 1L3 8l3 7M11 1l3 7-3 7" stroke="#000" />
    </svg>
  );
}

function CablePullWindow() {
  return (
    <div className="absolute left-[25px] top-[46px] w-[960px] h-[557px] flex flex-col bg-[#f0f0f0] border border-[#6b6f78] shadow-[0_0_12px_rgba(0,0,0,0.35)]">
      <div className={`h-[37px] shrink-0 flex items-center bg-[#2b5597] text-[#dde4f0] text-[11px] ${FONT}`}>
        <div className="w-[130px] flex items-center pl-[17px]">
          <Printer className="w-[16px] h-[16px] text-[#a9bcd8] fill-[#a9bcd8]" />
          <FileSearch className="w-[16px] h-[16px] ml-[8px] text-[#7f9ac4]" />
          <div className="w-[13px] h-[13px] ml-[9px] rounded-full bg-[#cfe2d8]" />
          <div className="ml-[10px] flex flex-col items-center gap-[1px]">
            <div className="w-[6px] h-[1px] bg-white" />
            <div className="w-0 h-0 border-x-[3px] border-x-transparent border-t-[3px] border-t-white" />
          </div>
        </div>
        <div className="flex-1 text-center whitespace-pre pr-[6px] pt-[5px]">Cable Pulling Systems - CablePulling     Revision: Base</div>
        <div className="w-[130px] flex items-center justify-end pr-[16px] gap-[25px] -mt-[6px]">
          <Minus className="w-[12px] h-[12px] text-[#c8d4e6] mt-[3px]" strokeWidth={2} />
          <div className="w-[9px] h-[9px] border border-[#dde4f0] border-t-2" />
          <X className="w-[12px] h-[12px] text-[#dde4f0]" strokeWidth={2} />
        </div>
      </div>

      <div className="h-[28px] shrink-0 flex items-center pt-[2px]">
        <div className={`flex w-[241px] text-[11px] text-[#3f3f4a] ${FONT}`}>
          <span className="ml-[24px]">File</span>
          <span className="ml-[35px] font-semibold text-[#333] border-b-[3px] border-[#0a5ec8] -mb-[3px] pb-[1px]">Home</span>
          <span className="ml-[28px]">View</span>
          <span className="ml-[28px]">Help</span>
        </div>
        <div className={`w-[200px] h-[23px] bg-white border border-[#c8c8c8] flex items-center pl-[5px] text-[11px] text-[#777] ${FONT}`}>
          <Lightbulb className="w-[13px] h-[13px] text-[#8a8a8a]" />
          <span className="ml-[10px] tracking-[0.2px]">Type a Command</span>
        </div>
        <div className="flex-1" />
        <div className="w-[130px] h-[19px] mr-[6px] -mt-[3px] bg-white border border-[#c8c8c8] flex items-center justify-end pr-[1px]">
          <Calculator className="w-[14px] h-[14px] text-[#4f6a90]" />
        </div>
      </div>

      <Ribbon />

      <div className="h-[6px] shrink-0" />
      <div className="flex h-[174px] shrink-0 pl-[5px] pr-[6px]">
        <div className="w-[474px] shrink-0 flex flex-col">
          <div className="flex h-[148px]">
            <div className="w-[458px] h-[148px] border-2 border-[#7a7a7a] border-r-[2px] overflow-hidden"><Chart /></div>
            <div className="w-[16px] flex flex-col items-center pt-[4px]">
              <Scroll dir="up" />
              <div className="flex-1 flex flex-col justify-end w-full"><div className="h-[17px] mb-[3px] bg-[#cbcbcb]" /></div>
              <Scroll dir="down" className="mb-[2px]" />
            </div>
          </div>
          <div className="h-[18px] flex items-center px-[4px] bg-[#f0f0f0]">
            <Scroll dir="left" />
            <div className="w-[17px] h-[16px] ml-[3px] bg-[#cbcbcb]" />
            <div className="flex-1" />
            <Scroll dir="right" className="mr-[16px]" />
          </div>
        </div>
        <div className="w-[6px]" />
        <div className="relative flex-1 h-[168px] bg-white border-l-2 border-[#7a7a7a] border-t-2 border-t-[#a8a8a8] border-r-2 border-r-[#e8e8e8] font-['Liberation_Sans',sans-serif] font-bold text-[13px] overflow-hidden">
          <span className="absolute left-[2px] top-0 text-[#f00000]">Cable2</span>
          <span className="absolute left-[297px] top-[18px] text-black">Conduit</span>
          <span className="absolute left-[4px] top-[113px] text-[#f00000]">% Fill = 30,4</span>
          <svg viewBox="0 0 120 120" className="absolute left-[171px] top-[22px] w-[120px] h-[120px]">
            <circle cx="60" cy="60" r="56.5" fill="none" stroke="#000" strokeWidth="7" />
            <circle cx="60" cy="60" r="56.5" fill="none" stroke="#0000f0" strokeWidth="5" />
            <circle cx="60" cy="85" r="29" fill="#ff0000" stroke="#000" />
          </svg>
        </div>
      </div>

      <div className="h-[197px] ml-[5px] mr-[6px] flex flex-col border-t-2 border-l-2 border-[#7a7a7a] border-b-2 border-b-white">
        <div className="flex h-[179px]">
          <div className="flex-1 overflow-hidden pt-[14px]">
            <SegRow label="Segment Name" values={['AB', 'BC', 'CD', 'DE', 'EF']} />
            <SegRow top="mt-[12px]" label="Length" values={['6', '410', '170', '12', '5']} />
            <SegRow top="mt-[12px]" label="Slope" values={['-90', '-10', '7', '0', '90']} />
            <div className={`flex items-center mt-[13px] text-[11.5px] text-[#222] ${FORM}`}>
              <span className="ml-[12px] w-[14px]">ID</span>
              <Field w="w-[67px]" text="A" />
              <div className="relative ml-[14px] w-[538px] h-[16px] mt-[3px] bg-[#008000] flex flex-col justify-center gap-[6px]">
                <div className="h-[1px] bg-[#00ff00]" />
                <div className="h-[1px] bg-[#00ff00]" />
                <Bend left="left-[90px]" />
                <Bend left="left-[202px]" />
                <Bend left="left-[314px]" />
                <Bend left="left-[426px]" />
              </div>
              <div className="ml-[3px]"><Field w="w-[67px]" text="F" /></div>
              <span className="ml-[48px]">ID</span>
            </div>
            <div className="flex items-center mt-[16px]">
              <div className={`w-[142px] text-right text-[11px] text-[#222] ${FORM}`}>Bend Location</div>
              <div className="ml-[41px]"><Field text="B-B1" /></div>
              <div className="ml-[66px]"><Field text="C-C1" /></div>
              <div className="ml-[66px]"><Field text="D-D1" /></div>
              <div className="ml-[66px]"><Field text="E-E1" /></div>
            </div>
            <div className="flex items-center mt-[13px]">
              <div className="w-[183px]" />
              <Field />
              <div className="ml-[66px]"><Field /></div>
              <div className="ml-[66px]"><Field /></div>
              <div className="ml-[66px]"><Field /></div>
            </div>
          </div>
          <div className="w-[16px] flex flex-col items-center pt-[3px] bg-[#f0f0f0] shrink-0">
            <Scroll dir="up" />
            <div className="w-full h-[72px] mt-[4px] bg-[#cbcbcb]" />
            <div className="flex-1" />
            <Scroll dir="down" className="mb-[5px]" />
          </div>
        </div>
        <div className="h-[15px] flex items-center pl-[3px] pr-[20px] border-t border-white">
          <Scroll dir="left" />
          <div className="w-[285px] h-[15px] ml-[2px] bg-[#cbcbcb]" />
          <div className="flex-1" />
          <Scroll dir="right" />
        </div>
      </div>

      <div className="flex-1 flex items-end justify-end pr-[3px] pb-[2px]">
        <div className="w-[9px] h-[9px] bg-[radial-gradient(#aaaaaa_1px,transparent_1.2px)] bg-[size:3px_3px]" />
      </div>
    </div>
  );
}

export default function App() {
  return (
    <div className="relative w-[1201px] h-[712px] overflow-hidden flex flex-col bg-[#f1f5fd]">
      <TopBars />
      <SecondBar />
      <GhostBar />
      <div className="h-[582px] flex">
        <div className="w-[1081px] flex flex-col shrink-0">
          <div className="h-[543px] flex">
            <Canvas />
            <div className="w-[19px] flex flex-col items-center bg-[#f0f0f0] pt-[4px] pr-[2px]">
              <Scroll dir="up" />
              <div className="w-full h-[16px] mt-[3px] bg-[#cbcbcb]" />
              <div className="flex-1" />
              <Scroll dir="down" className="mb-[3px]" />
            </div>
          </div>
          <div className="h-[17px] flex items-center bg-[#f0f0f0] border-b border-[#d8d8d8]">
            <div className="w-[18px] h-[16px] ml-[4px] bg-[#cbcbcb]" />
            <div className="flex-1" />
            <Scroll dir="right" className="mr-[25px]" />
          </div>
          <div className="flex-1 flex items-end bg-[#eef2fc]">
            <div className={`w-[85px] h-[20px] bg-[#f0f0f0] border border-l-0 border-[#d4d4d4] border-b-0 text-[11px] leading-[20px] text-[#444] ${FONT} overflow-hidden whitespace-nowrap`}>
              <span className="-ml-[3px] inline-block">Message Log</span>
            </div>
          </div>
        </div>
        <Palettes />
      </div>
      <BottomBar />
      <StatusBar />
      <CablePullWindow />
    </div>
  );
}
